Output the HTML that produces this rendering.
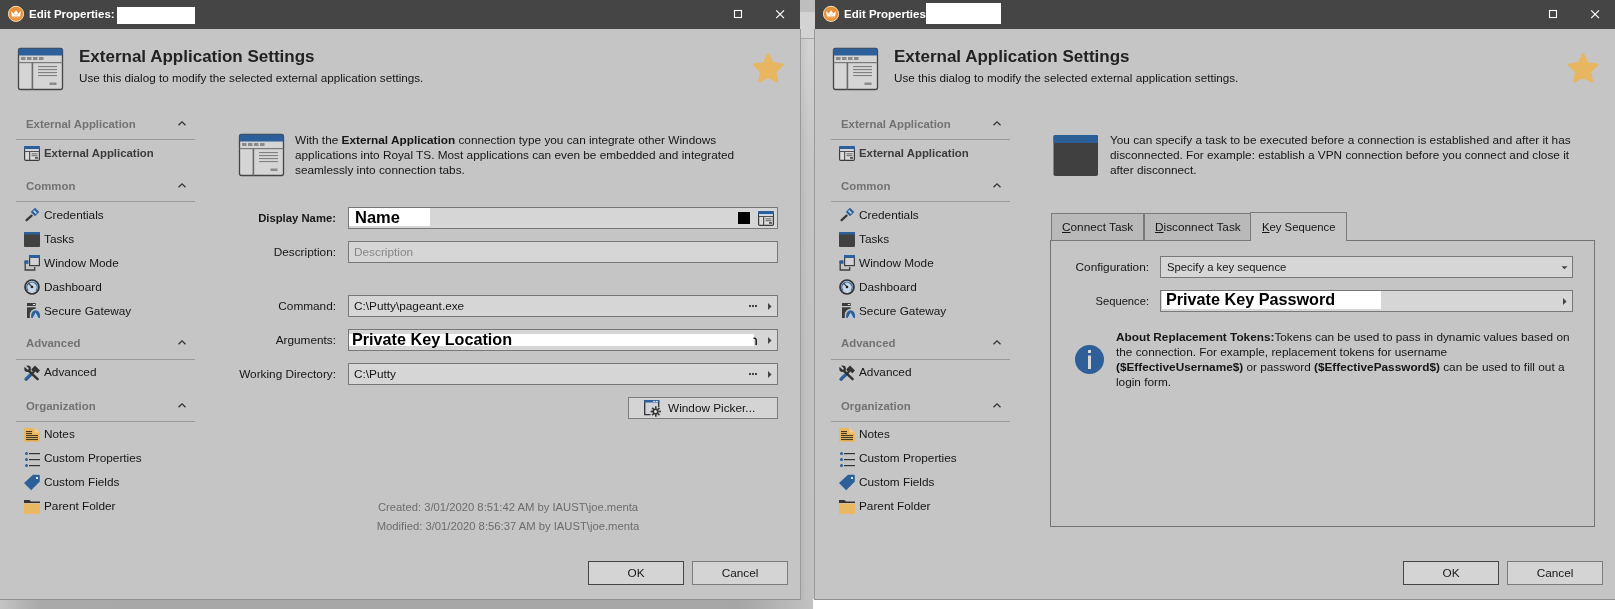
<!DOCTYPE html>
<html><head><meta charset="utf-8">
<style>
*{box-sizing:border-box}
html,body{margin:0;padding:0;width:1615px;height:609px;overflow:hidden;background:#fff;font-family:"Liberation Sans",sans-serif;font-size:11.8px;color:#161616}
.t{position:absolute;white-space:nowrap;line-height:14px;will-change:transform}
svg{position:absolute;overflow:visible}
#strip{position:absolute;left:0;top:599px;width:813px;height:10px;background:linear-gradient(90deg,#c4c4c4 0,#a9a9a9 40px,#a6a6a6 740px,#c2c2c2 813px)}
#gap{position:absolute;left:800px;top:0;width:15px;height:599px;background:#c1c1c1}
#gaptop{position:absolute;left:800px;top:0;width:15px;height:12px;background:#bebebe}
#gapmid{position:absolute;left:800px;top:12px;width:15px;height:17px;background:#d3d3d3}
#gapmid2{position:absolute;left:801px;top:29px;width:13px;height:10px;background:#d3d3d3;border-bottom:1px solid #a8a8a8}
#gapbody{position:absolute;left:801px;top:39px;width:13px;height:560px;background:linear-gradient(90deg,rgba(0,0,0,0.05),rgba(0,0,0,0) 60%),linear-gradient(180deg,#d2d2d2 0,#c6c6c6 120px,#c3c3c3 300px,#c2c2c2 100%)}
.dlg{position:absolute;top:0;height:600px;background:#c5c5c5;overflow:hidden;border-bottom:1px solid #8f8f8f}
.tb{position:absolute;left:0;top:0;width:100%;height:29px;background:#454545}
.ttl{color:#fff;font-weight:bold;font-size:11.5px}
.wb{position:absolute;background:#fff}
.h1{font-size:17px;font-weight:bold;color:#222;line-height:20px}
.nh{font-weight:bold;color:#727272;font-size:11.4px}
.sep{position:absolute;left:16px;width:179px;height:1px;background:#9a9a9a}
.lbl{text-align:right;width:200px}
.box{position:absolute;background:#d6d6d6;border:1px solid #787878}
.btn{position:absolute;background:#d4d4d4;border:1px solid #7c7c7c;height:24px;width:96px}
.btn span{position:absolute;left:0;right:0;top:4px;text-align:center;line-height:14px;will-change:transform}
</style></head><body>
<div id="strip"></div><div id="gap"></div><div id="gapmid2"></div><div id="gapbody"></div>
<div class="dlg" style="left:0;width:801px;border-right:1px solid #9a9a9a"></div>
<div style="position:absolute;left:0px;top:0px;width:800px;height:29px;background:#454545;"></div>
<svg style="left:7px;top:5px" width="18" height="18" viewBox="0 0 18 18">
<circle cx="9" cy="8.85" r="7.6" fill="#e8913a" stroke="#f6dcb6" stroke-width="1"/>
<path d="M4 6.2L6.6 8.6 9 5.3 11.4 8.6 14 6.2 13.1 11.6H4.9z" fill="#fff"/>
<path d="M6.6 8.6L9 10.4 11.4 8.6" fill="none" stroke="#e9b27a" stroke-width="0.7"/>
<rect x="5" y="12.2" width="8" height="1.3" fill="#f0a860"/>
</svg>
<div class="t ttl" style="left:29px;top:7px;">Edit Properties:</div>
<div style="position:absolute;left:117px;top:7px;width:78px;height:17px;background:#fff;"></div>
<svg style="left:733px;top:9px" width="53" height="11" viewBox="0 0 53 11">
<rect x="1.5" y="1.5" width="7" height="7" fill="none" stroke="#fff" stroke-width="1.1"/>
<path d="M43.2 1.3L51 9.1M51 1.3L43.2 9.1" stroke="#fff" stroke-width="1.2"/>
</svg>
<svg style="left:18px;top:48px" width="45" height="42" viewBox="0 0 45 42">
<rect x="0.5" y="0.5" width="44" height="41" rx="2" fill="#d5d5d5" stroke="#454545" stroke-width="1.3"/>
<path d="M2 0.5h41a1.5 1.5 0 0 1 1.5 1.5v5.5h-44v-5.5a1.5 1.5 0 0 1 1.5-1.5z" fill="#2d5f9a"/>
<rect x="3" y="9" width="4.5" height="3" fill="#8a8a8a"/><rect x="9" y="9" width="4.5" height="3" fill="#8a8a8a"/>
<rect x="15" y="9" width="4.5" height="3" fill="#8a8a8a"/><rect x="21" y="9" width="4.5" height="3" fill="#8a8a8a"/>
<rect x="0.5" y="14" width="44" height="1.2" fill="#7a7a7a"/>
<rect x="13.6" y="14.5" width="1.6" height="27" fill="#6a6a6a"/>
<rect x="20" y="18" width="19" height="1.1" fill="#808080"/><rect x="20" y="21" width="19" height="1.1" fill="#808080"/>
<rect x="20" y="24" width="19" height="1.1" fill="#808080"/><rect x="20" y="27" width="19" height="1.1" fill="#808080"/>
<rect x="31.5" y="34.5" width="7" height="2.5" fill="#8a8a8a"/>
</svg>
<div class="t h1" style="left:79px;top:51px;top:47px">External Application Settings</div>
<div class="t " style="left:79px;top:71px;font-size:11.7px">Use this dialog to modify the selected external application settings.</div>
<svg style="left:752px;top:52px" width="33" height="34" viewBox="0 0 33 34">
<polygon points="16.20,2.30 20.55,11.31 30.47,12.66 23.24,19.59 25.02,29.44 16.20,24.70 7.38,29.44 9.16,19.59 1.93,12.66 11.85,11.31" fill="#e8b660" stroke="#e8b660" stroke-width="2.2" stroke-linejoin="round"/>
</svg>
<div class="t nh" style="left:26px;top:117px;">External Application</div>
<svg style="left:178px;top:121px" width="8" height="5" viewBox="0 0 8 5"><path d="M0.5 4.3L4 0.9 7.5 4.3" fill="none" stroke="#333" stroke-width="1.3"/></svg>
<div class="sep" style="left:16px;top:139px"></div>
<svg style="left:24px;top:146px" width="16" height="15" viewBox="0 0 16 15">
<rect x="0.6" y="0.6" width="14.8" height="13.8" rx="1.2" fill="#dcdcdc" stroke="#3a3a3a" stroke-width="1.2"/>
<path d="M1.4 0h13.2a1.4 1.4 0 0 1 1.4 1.4v1.8h-16v-1.8a1.4 1.4 0 0 1 1.4-1.4z" fill="#2d5f9a"/>
<rect x="1.2" y="3.2" width="13.6" height="1.8" fill="#d3dae2"/>
<rect x="0.6" y="5" width="14.8" height="1" fill="#505050"/>
<rect x="5" y="5.5" width="1.2" height="9" fill="#505050"/>
<rect x="7.5" y="7.4" width="6" height="0.9" fill="#555"/><rect x="7.5" y="9.3" width="6" height="0.9" fill="#555"/>
<rect x="11" y="11" width="3" height="1.8" fill="#555"/>
</svg>
<div class="t " style="left:44px;top:146px;font-weight:bold;color:#3c3c3c;font-size:11.4px">External Application</div>
<div class="t nh" style="left:26px;top:179px;">Common</div>
<svg style="left:178px;top:183px" width="8" height="5" viewBox="0 0 8 5"><path d="M0.5 4.3L4 0.9 7.5 4.3" fill="none" stroke="#333" stroke-width="1.3"/></svg>
<div class="sep" style="left:16px;top:201px"></div>
<div class="t " style="left:44px;top:208px;">Credentials</div>
<div class="t " style="left:44px;top:232px;">Tasks</div>
<div class="t " style="left:44px;top:256px;">Window Mode</div>
<div class="t " style="left:44px;top:280px;">Dashboard</div>
<div class="t " style="left:44px;top:304px;">Secure Gateway</div>
<div class="t nh" style="left:26px;top:336px;">Advanced</div>
<svg style="left:178px;top:340px" width="8" height="5" viewBox="0 0 8 5"><path d="M0.5 4.3L4 0.9 7.5 4.3" fill="none" stroke="#333" stroke-width="1.3"/></svg>
<div class="sep" style="left:16px;top:359px"></div>
<div class="t " style="left:44px;top:365px;">Advanced</div>
<div class="t nh" style="left:26px;top:399px;">Organization</div>
<svg style="left:178px;top:403px" width="8" height="5" viewBox="0 0 8 5"><path d="M0.5 4.3L4 0.9 7.5 4.3" fill="none" stroke="#333" stroke-width="1.3"/></svg>
<div class="sep" style="left:16px;top:421px"></div>
<div class="t " style="left:44px;top:427px;">Notes</div>
<div class="t " style="left:44px;top:451px;">Custom Properties</div>
<div class="t " style="left:44px;top:475px;">Custom Fields</div>
<div class="t " style="left:44px;top:499px;">Parent Folder</div>
<svg style="left:24px;top:206px" width="16" height="16" viewBox="0 0 16 16">
<path d="M2.6 14.2L7.6 9.6" stroke="#3a3a3a" stroke-width="2.3" stroke-linecap="round"/>
<rect x="8" y="3" width="6" height="6" transform="rotate(45 11 6)" fill="#2d5f9a"/>
<rect x="10.2" y="4" width="1.6" height="4" transform="rotate(-45 11 6)" fill="#b8d4ee"/>
</svg>
<svg style="left:24px;top:232px" width="16" height="15" viewBox="0 0 16 15">
<rect x="0" y="0" width="16" height="15" rx="1" fill="#414141"/>
<path d="M1 0h14a1 1 0 0 1 1 1v1.6h-16v-1.6a1 1 0 0 1 1-1z" fill="#2d5f9a"/>
</svg>
<svg style="left:24px;top:255px" width="16" height="16" viewBox="0 0 16 16">
<path d="M1.2 6v9h9.5v-3" fill="none" stroke="#3f3f3f" stroke-width="1.3"/>
<rect x="0.5" y="5.3" width="4" height="3.5" fill="#2d5f9a"/>
<rect x="5.6" y="0.6" width="9.8" height="10" fill="#d2d2d2" stroke="#3f3f3f" stroke-width="1.2"/>
<rect x="5" y="0" width="11" height="3" fill="#2d5f9a"/>
</svg>
<svg style="left:24px;top:279px" width="16" height="16" viewBox="0 0 16 16">
<circle cx="8" cy="8" r="7" fill="#c9d6e2" stroke="#333" stroke-width="1.7"/>
<path d="M4 11.6A5.2 5.2 0 1 1 12 11.6" fill="none" stroke="#3a6aa0" stroke-width="1.3"/>
<path d="M5 4.6L8 7.8" stroke="#333" stroke-width="1.1" stroke-linecap="round"/>
<circle cx="8" cy="8" r="1.3" fill="#222"/>
</svg>
<svg style="left:24px;top:302px" width="16" height="16" viewBox="0 0 16 16">
<rect x="3" y="1" width="8.7" height="3" fill="#3a3a3a"/>
<rect x="8.8" y="2" width="2.2" height="1" fill="#e0e0e0"/>
<rect x="3" y="5.3" width="8.7" height="10.7" fill="#3a3a3a"/>
<path d="M5.8 16v-3a5.8 6.2 0 0 1 11.6 0V16z" fill="#c5c5c5"/>
<path d="M7.2 16v-2.6a4.4 5.2 0 0 1 8.8 0V16z" fill="#2d5f9a"/>
<path d="M8.6 16l3-5.6 3 5.6z" fill="#b8cce0"/>
</svg>
<svg style="left:24px;top:365px" width="16" height="16" viewBox="0 0 16 16">
<path d="M10 6.8L6 10.4" stroke="#333" stroke-width="2.2"/><path d="M6.6 9.8L2 14.2" stroke="#2d5f9a" stroke-width="3.3" stroke-linecap="round"/>
<polygon points="7.2,4.6 11,0.6 16,5.4 13.4,8.2 11.2,6.6 9.4,7.6" fill="#333"/>
<path d="M4.6 5.6L13.6 14.2" stroke="#333" stroke-width="2.5" stroke-linecap="round"/>
<circle cx="3.6" cy="3.8" r="3.3" fill="#333"/>
<path d="M0.6 0.4L3.8 3.6" stroke="#c5c5c5" stroke-width="2" stroke-linecap="round"/>
</svg>
<svg style="left:24px;top:428px" width="16" height="14" viewBox="0 0 16 14">
<path d="M0 0h10.5l5.5 4.5V14H0z" fill="#e8b865"/>
<path d="M10.5 0l5.5 4.5H10.5z" fill="#efcf90"/>
<rect x="2" y="3" width="6" height="1.1" fill="#4a3a20"/><rect x="2" y="5" width="6" height="1.1" fill="#4a3a20"/>
<rect x="2" y="7" width="12" height="1.1" fill="#4a3a20"/><rect x="2" y="9" width="12" height="1.1" fill="#4a3a20"/>
<rect x="2" y="11" width="12" height="1.1" fill="#4a3a20"/>
</svg>
<svg style="left:24px;top:451px" width="16" height="16" viewBox="0 0 16 16">
<circle cx="2.5" cy="2.5" r="1.5" fill="#2d5f9a"/><circle cx="2.5" cy="8.5" r="1.5" fill="#2d5f9a"/><circle cx="2.5" cy="14.5" r="1.5" fill="#2d5f9a"/>
<rect x="5" y="2" width="11" height="1.2" fill="#333"/><rect x="5" y="8" width="11" height="1.2" fill="#333"/><rect x="5" y="14" width="11" height="1.2" fill="#333"/>
</svg>
<svg style="left:24px;top:474px" width="16" height="17" viewBox="0 0 16 17">
<path d="M9 0.8h5.8a1 1 0 0 1 1 1V7.6L7.2 16.2 0 9z" fill="#2d5f9a"/>
<rect x="12" y="3" width="2" height="2" fill="#d8e4f0"/>
</svg>
<svg style="left:24px;top:499px" width="16" height="15" viewBox="0 0 16 15">
<path d="M0 1h5.5l1.5 1.5h9v1.4h-16z" fill="#333"/>
<rect x="0" y="4.6" width="16" height="10.4" fill="#e8b865"/>
</svg>
<svg style="left:239px;top:134px" width="45" height="42" viewBox="0 0 45 42">
<rect x="0.5" y="0.5" width="44" height="41" rx="2" fill="#d5d5d5" stroke="#454545" stroke-width="1.3"/>
<path d="M2 0.5h41a1.5 1.5 0 0 1 1.5 1.5v5.5h-44v-5.5a1.5 1.5 0 0 1 1.5-1.5z" fill="#2d5f9a"/>
<rect x="3" y="9" width="4.5" height="3" fill="#8a8a8a"/><rect x="9" y="9" width="4.5" height="3" fill="#8a8a8a"/>
<rect x="15" y="9" width="4.5" height="3" fill="#8a8a8a"/><rect x="21" y="9" width="4.5" height="3" fill="#8a8a8a"/>
<rect x="0.5" y="14" width="44" height="1.2" fill="#7a7a7a"/>
<rect x="13.6" y="14.5" width="1.6" height="27" fill="#6a6a6a"/>
<rect x="20" y="18" width="19" height="1.1" fill="#808080"/><rect x="20" y="21" width="19" height="1.1" fill="#808080"/>
<rect x="20" y="24" width="19" height="1.1" fill="#808080"/><rect x="20" y="27" width="19" height="1.1" fill="#808080"/>
<rect x="31.5" y="34.5" width="7" height="2.5" fill="#8a8a8a"/>
</svg>
<div class="t " style="left:295px;top:133px;">With the <b>External Application</b> connection type you can integrate other Windows</div>
<div class="t " style="left:295px;top:148px;">applications into Royal TS. Most applications can even be embedded and integrated</div>
<div class="t " style="left:295px;top:163px;">seamlessly into connection tabs.</div>
<div class="t lbl " style="left:136px;top:211px;font-weight:bold;font-size:11.3px">Display Name:</div>
<div class="box" style="left:348px;top:207px;width:430px;height:22px"></div>
<div style="position:absolute;left:349px;top:208px;width:81px;height:18px;background:#fff;"></div>
<div class="t " style="left:355px;top:212px;font-weight:bold;font-size:16.5px;color:#000;line-height:18px;top:208px">Name</div>
<div style="position:absolute;left:738px;top:212px;width:12px;height:12px;background:#000;"></div>
<svg style="left:758px;top:211px" width="16" height="15" viewBox="0 0 16 15">
<rect x="0.6" y="0.6" width="14.8" height="13.8" rx="1.2" fill="#dcdcdc" stroke="#3a3a3a" stroke-width="1.2"/>
<path d="M1.4 0h13.2a1.4 1.4 0 0 1 1.4 1.4v1.8h-16v-1.8a1.4 1.4 0 0 1 1.4-1.4z" fill="#2d5f9a"/>
<rect x="1.2" y="3.2" width="13.6" height="1.8" fill="#d3dae2"/>
<rect x="0.6" y="5" width="14.8" height="1" fill="#505050"/>
<rect x="5" y="5.5" width="1.2" height="9" fill="#505050"/>
<rect x="7.5" y="7.4" width="6" height="0.9" fill="#555"/><rect x="7.5" y="9.3" width="6" height="0.9" fill="#555"/>
<rect x="11" y="11" width="3" height="1.8" fill="#555"/>
</svg>
<div class="t lbl " style="left:136px;top:245px;">Description:</div>
<div class="box" style="left:348px;top:241px;width:430px;height:22px"></div>
<div class="t " style="left:354px;top:245px;color:#858585">Description</div>
<div class="t lbl " style="left:136px;top:299px;">Command:</div>
<div class="box" style="left:348px;top:295px;width:430px;height:22px"></div>
<div class="t " style="left:354px;top:299px;">C:\Putty\pageant.exe</div>
<svg style="left:749px;top:305px" width="9" height="2" viewBox="0 0 9 2"><rect x="0" y="0" width="2" height="2" fill="#444"/><rect x="3" y="0" width="2" height="2" fill="#444"/><rect x="6" y="0" width="2" height="2" fill="#444"/></svg>
<svg style="left:768px;top:303px" width="4" height="7" viewBox="0 0 4 7"><path d="M0 0L3.6 3.5 0 7z" fill="#444"/></svg>
<div class="t lbl " style="left:136px;top:333px;">Arguments:</div>
<div class="box" style="left:348px;top:329px;width:430px;height:22px"></div>
<div style="position:absolute;left:349px;top:334px;width:405px;height:12px;background:#fff;"></div>
<svg style="left:753px;top:337px" width="5" height="9" viewBox="0 0 5 9"><path d="M0.5 1.2Q3.2 0.6 3.2 3.4V8" fill="none" stroke="#111" stroke-width="1.4"/></svg>
<div class="t " style="left:352px;top:334px;font-weight:bold;font-size:16.2px;color:#000;line-height:18px;top:330px">Private Key Location</div>
<svg style="left:768px;top:337px" width="4" height="7" viewBox="0 0 4 7"><path d="M0 0L3.6 3.5 0 7z" fill="#444"/></svg>
<div class="t lbl " style="left:136px;top:367px;">Working Directory:</div>
<div class="box" style="left:348px;top:363px;width:430px;height:22px"></div>
<div class="t " style="left:354px;top:367px;">C:\Putty</div>
<svg style="left:749px;top:373px" width="9" height="2" viewBox="0 0 9 2"><rect x="0" y="0" width="2" height="2" fill="#444"/><rect x="3" y="0" width="2" height="2" fill="#444"/><rect x="6" y="0" width="2" height="2" fill="#444"/></svg>
<svg style="left:768px;top:371px" width="4" height="7" viewBox="0 0 4 7"><path d="M0 0L3.6 3.5 0 7z" fill="#444"/></svg>
<div class="btn" style="left:628px;top:397px;width:150px;height:22px"></div>
<svg style="left:644px;top:400px" width="18" height="17" viewBox="0 0 18 17">
<path d="M6.5 14.6H0.7V0.7h14V7.2" fill="#d0d4d8" stroke="#333" stroke-width="1.3"/>
<path d="M1 0h13.4a1 1 0 0 1 1 1v1.6h-15.4v-1.6a1 1 0 0 1 1-1z" fill="#2d5f9a"/>
<rect x="9" y="0.9" width="2.2" height="1" fill="#d8e6f4"/><rect x="11.8" y="0.9" width="2.2" height="1" fill="#d8e6f4"/>
<circle cx="11.5" cy="11.5" r="5.4" fill="#d4d4d4"/>
<rect x="11" y="6.3" width="1.6" height="2.4" fill="#333" transform="rotate(0 11.8 11.5)"/><rect x="11" y="6.3" width="1.6" height="2.4" fill="#333" transform="rotate(45 11.8 11.5)"/><rect x="11" y="6.3" width="1.6" height="2.4" fill="#333" transform="rotate(90 11.8 11.5)"/><rect x="11" y="6.3" width="1.6" height="2.4" fill="#333" transform="rotate(135 11.8 11.5)"/><rect x="11" y="6.3" width="1.6" height="2.4" fill="#333" transform="rotate(180 11.8 11.5)"/><rect x="11" y="6.3" width="1.6" height="2.4" fill="#333" transform="rotate(225 11.8 11.5)"/><rect x="11" y="6.3" width="1.6" height="2.4" fill="#333" transform="rotate(270 11.8 11.5)"/><rect x="11" y="6.3" width="1.6" height="2.4" fill="#333" transform="rotate(315 11.8 11.5)"/>
<circle cx="11.5" cy="11.5" r="3.1" fill="#333"/>
<circle cx="11.5" cy="11.5" r="1.5" fill="#e8e8e8"/>
</svg>
<div class="t " style="left:668px;top:401px;">Window Picker...</div>
<div class="t" style="left:308px;width:400px;text-align:center;top:500px;color:#6c6c6c;font-size:11.25px">Created: 3/01/2020 8:51:42 AM by IAUST\joe.menta</div>
<div class="t" style="left:308px;width:400px;text-align:center;top:519px;color:#6c6c6c;font-size:11.25px">Modified: 3/01/2020 8:56:37 AM by IAUST\joe.menta</div>
<div class="btn" style="left:588px;top:561px;width:96px;border-color:#454545"><span>OK</span></div>
<div class="btn" style="left:692px;top:561px;width:96px;border-color:#7c7c7c"><span>Cancel</span></div>
<div class="dlg" style="left:814px;width:801px;border-left:1px solid #9a9a9a"></div>
<div style="position:absolute;left:815px;top:0px;width:800px;height:29px;background:#454545;"></div>
<svg style="left:822px;top:5px" width="18" height="18" viewBox="0 0 18 18">
<circle cx="9" cy="8.85" r="7.6" fill="#e8913a" stroke="#f6dcb6" stroke-width="1"/>
<path d="M4 6.2L6.6 8.6 9 5.3 11.4 8.6 14 6.2 13.1 11.6H4.9z" fill="#fff"/>
<path d="M6.6 8.6L9 10.4 11.4 8.6" fill="none" stroke="#e9b27a" stroke-width="0.7"/>
<rect x="5" y="12.2" width="8" height="1.3" fill="#f0a860"/>
</svg>
<div class="t ttl" style="left:844px;top:7px;">Edit Properties</div>
<div style="position:absolute;left:926px;top:3px;width:75px;height:21px;background:#fff;"></div>
<svg style="left:1548px;top:9px" width="53" height="11" viewBox="0 0 53 11">
<rect x="1.5" y="1.5" width="7" height="7" fill="none" stroke="#fff" stroke-width="1.1"/>
<path d="M43.2 1.3L51 9.1M51 1.3L43.2 9.1" stroke="#fff" stroke-width="1.2"/>
</svg>
<svg style="left:833px;top:48px" width="45" height="42" viewBox="0 0 45 42">
<rect x="0.5" y="0.5" width="44" height="41" rx="2" fill="#d5d5d5" stroke="#454545" stroke-width="1.3"/>
<path d="M2 0.5h41a1.5 1.5 0 0 1 1.5 1.5v5.5h-44v-5.5a1.5 1.5 0 0 1 1.5-1.5z" fill="#2d5f9a"/>
<rect x="3" y="9" width="4.5" height="3" fill="#8a8a8a"/><rect x="9" y="9" width="4.5" height="3" fill="#8a8a8a"/>
<rect x="15" y="9" width="4.5" height="3" fill="#8a8a8a"/><rect x="21" y="9" width="4.5" height="3" fill="#8a8a8a"/>
<rect x="0.5" y="14" width="44" height="1.2" fill="#7a7a7a"/>
<rect x="13.6" y="14.5" width="1.6" height="27" fill="#6a6a6a"/>
<rect x="20" y="18" width="19" height="1.1" fill="#808080"/><rect x="20" y="21" width="19" height="1.1" fill="#808080"/>
<rect x="20" y="24" width="19" height="1.1" fill="#808080"/><rect x="20" y="27" width="19" height="1.1" fill="#808080"/>
<rect x="31.5" y="34.5" width="7" height="2.5" fill="#8a8a8a"/>
</svg>
<div class="t h1" style="left:894px;top:51px;top:47px">External Application Settings</div>
<div class="t " style="left:894px;top:71px;font-size:11.7px">Use this dialog to modify the selected external application settings.</div>
<svg style="left:1567px;top:52px" width="33" height="34" viewBox="0 0 33 34">
<polygon points="16.20,2.30 20.55,11.31 30.47,12.66 23.24,19.59 25.02,29.44 16.20,24.70 7.38,29.44 9.16,19.59 1.93,12.66 11.85,11.31" fill="#e8b660" stroke="#e8b660" stroke-width="2.2" stroke-linejoin="round"/>
</svg>
<div class="t nh" style="left:841px;top:117px;">External Application</div>
<svg style="left:993px;top:121px" width="8" height="5" viewBox="0 0 8 5"><path d="M0.5 4.3L4 0.9 7.5 4.3" fill="none" stroke="#333" stroke-width="1.3"/></svg>
<div class="sep" style="left:831px;top:139px"></div>
<svg style="left:839px;top:146px" width="16" height="15" viewBox="0 0 16 15">
<rect x="0.6" y="0.6" width="14.8" height="13.8" rx="1.2" fill="#dcdcdc" stroke="#3a3a3a" stroke-width="1.2"/>
<path d="M1.4 0h13.2a1.4 1.4 0 0 1 1.4 1.4v1.8h-16v-1.8a1.4 1.4 0 0 1 1.4-1.4z" fill="#2d5f9a"/>
<rect x="1.2" y="3.2" width="13.6" height="1.8" fill="#d3dae2"/>
<rect x="0.6" y="5" width="14.8" height="1" fill="#505050"/>
<rect x="5" y="5.5" width="1.2" height="9" fill="#505050"/>
<rect x="7.5" y="7.4" width="6" height="0.9" fill="#555"/><rect x="7.5" y="9.3" width="6" height="0.9" fill="#555"/>
<rect x="11" y="11" width="3" height="1.8" fill="#555"/>
</svg>
<div class="t " style="left:859px;top:146px;font-weight:bold;color:#3c3c3c;font-size:11.4px">External Application</div>
<div class="t nh" style="left:841px;top:179px;">Common</div>
<svg style="left:993px;top:183px" width="8" height="5" viewBox="0 0 8 5"><path d="M0.5 4.3L4 0.9 7.5 4.3" fill="none" stroke="#333" stroke-width="1.3"/></svg>
<div class="sep" style="left:831px;top:201px"></div>
<div class="t " style="left:859px;top:208px;">Credentials</div>
<div class="t " style="left:859px;top:232px;">Tasks</div>
<div class="t " style="left:859px;top:256px;">Window Mode</div>
<div class="t " style="left:859px;top:280px;">Dashboard</div>
<div class="t " style="left:859px;top:304px;">Secure Gateway</div>
<div class="t nh" style="left:841px;top:336px;">Advanced</div>
<svg style="left:993px;top:340px" width="8" height="5" viewBox="0 0 8 5"><path d="M0.5 4.3L4 0.9 7.5 4.3" fill="none" stroke="#333" stroke-width="1.3"/></svg>
<div class="sep" style="left:831px;top:359px"></div>
<div class="t " style="left:859px;top:365px;">Advanced</div>
<div class="t nh" style="left:841px;top:399px;">Organization</div>
<svg style="left:993px;top:403px" width="8" height="5" viewBox="0 0 8 5"><path d="M0.5 4.3L4 0.9 7.5 4.3" fill="none" stroke="#333" stroke-width="1.3"/></svg>
<div class="sep" style="left:831px;top:421px"></div>
<div class="t " style="left:859px;top:427px;">Notes</div>
<div class="t " style="left:859px;top:451px;">Custom Properties</div>
<div class="t " style="left:859px;top:475px;">Custom Fields</div>
<div class="t " style="left:859px;top:499px;">Parent Folder</div>
<svg style="left:839px;top:206px" width="16" height="16" viewBox="0 0 16 16">
<path d="M2.6 14.2L7.6 9.6" stroke="#3a3a3a" stroke-width="2.3" stroke-linecap="round"/>
<rect x="8" y="3" width="6" height="6" transform="rotate(45 11 6)" fill="#2d5f9a"/>
<rect x="10.2" y="4" width="1.6" height="4" transform="rotate(-45 11 6)" fill="#b8d4ee"/>
</svg>
<svg style="left:839px;top:232px" width="16" height="15" viewBox="0 0 16 15">
<rect x="0" y="0" width="16" height="15" rx="1" fill="#414141"/>
<path d="M1 0h14a1 1 0 0 1 1 1v1.6h-16v-1.6a1 1 0 0 1 1-1z" fill="#2d5f9a"/>
</svg>
<svg style="left:839px;top:255px" width="16" height="16" viewBox="0 0 16 16">
<path d="M1.2 6v9h9.5v-3" fill="none" stroke="#3f3f3f" stroke-width="1.3"/>
<rect x="0.5" y="5.3" width="4" height="3.5" fill="#2d5f9a"/>
<rect x="5.6" y="0.6" width="9.8" height="10" fill="#d2d2d2" stroke="#3f3f3f" stroke-width="1.2"/>
<rect x="5" y="0" width="11" height="3" fill="#2d5f9a"/>
</svg>
<svg style="left:839px;top:279px" width="16" height="16" viewBox="0 0 16 16">
<circle cx="8" cy="8" r="7" fill="#c9d6e2" stroke="#333" stroke-width="1.7"/>
<path d="M4 11.6A5.2 5.2 0 1 1 12 11.6" fill="none" stroke="#3a6aa0" stroke-width="1.3"/>
<path d="M5 4.6L8 7.8" stroke="#333" stroke-width="1.1" stroke-linecap="round"/>
<circle cx="8" cy="8" r="1.3" fill="#222"/>
</svg>
<svg style="left:839px;top:302px" width="16" height="16" viewBox="0 0 16 16">
<rect x="3" y="1" width="8.7" height="3" fill="#3a3a3a"/>
<rect x="8.8" y="2" width="2.2" height="1" fill="#e0e0e0"/>
<rect x="3" y="5.3" width="8.7" height="10.7" fill="#3a3a3a"/>
<path d="M5.8 16v-3a5.8 6.2 0 0 1 11.6 0V16z" fill="#c5c5c5"/>
<path d="M7.2 16v-2.6a4.4 5.2 0 0 1 8.8 0V16z" fill="#2d5f9a"/>
<path d="M8.6 16l3-5.6 3 5.6z" fill="#b8cce0"/>
</svg>
<svg style="left:839px;top:365px" width="16" height="16" viewBox="0 0 16 16">
<path d="M10 6.8L6 10.4" stroke="#333" stroke-width="2.2"/><path d="M6.6 9.8L2 14.2" stroke="#2d5f9a" stroke-width="3.3" stroke-linecap="round"/>
<polygon points="7.2,4.6 11,0.6 16,5.4 13.4,8.2 11.2,6.6 9.4,7.6" fill="#333"/>
<path d="M4.6 5.6L13.6 14.2" stroke="#333" stroke-width="2.5" stroke-linecap="round"/>
<circle cx="3.6" cy="3.8" r="3.3" fill="#333"/>
<path d="M0.6 0.4L3.8 3.6" stroke="#c5c5c5" stroke-width="2" stroke-linecap="round"/>
</svg>
<svg style="left:839px;top:428px" width="16" height="14" viewBox="0 0 16 14">
<path d="M0 0h10.5l5.5 4.5V14H0z" fill="#e8b865"/>
<path d="M10.5 0l5.5 4.5H10.5z" fill="#efcf90"/>
<rect x="2" y="3" width="6" height="1.1" fill="#4a3a20"/><rect x="2" y="5" width="6" height="1.1" fill="#4a3a20"/>
<rect x="2" y="7" width="12" height="1.1" fill="#4a3a20"/><rect x="2" y="9" width="12" height="1.1" fill="#4a3a20"/>
<rect x="2" y="11" width="12" height="1.1" fill="#4a3a20"/>
</svg>
<svg style="left:839px;top:451px" width="16" height="16" viewBox="0 0 16 16">
<circle cx="2.5" cy="2.5" r="1.5" fill="#2d5f9a"/><circle cx="2.5" cy="8.5" r="1.5" fill="#2d5f9a"/><circle cx="2.5" cy="14.5" r="1.5" fill="#2d5f9a"/>
<rect x="5" y="2" width="11" height="1.2" fill="#333"/><rect x="5" y="8" width="11" height="1.2" fill="#333"/><rect x="5" y="14" width="11" height="1.2" fill="#333"/>
</svg>
<svg style="left:839px;top:474px" width="16" height="17" viewBox="0 0 16 17">
<path d="M9 0.8h5.8a1 1 0 0 1 1 1V7.6L7.2 16.2 0 9z" fill="#2d5f9a"/>
<rect x="12" y="3" width="2" height="2" fill="#d8e4f0"/>
</svg>
<svg style="left:839px;top:499px" width="16" height="15" viewBox="0 0 16 15">
<path d="M0 1h5.5l1.5 1.5h9v1.4h-16z" fill="#333"/>
<rect x="0" y="4.6" width="16" height="10.4" fill="#e8b865"/>
</svg>
<svg style="left:1053px;top:135px" width="45" height="41" viewBox="0 0 45 41">
<rect x="0.5" y="0" width="44.5" height="41" rx="1.8" fill="#404040"/>
<path d="M2.3 0h40.9a1.8 1.8 0 0 1 1.8 1.8v6.2h-44.5v-6.2a1.8 1.8 0 0 1 1.8-1.8z" fill="#2b5d96"/>
</svg>
<div class="t " style="left:1110px;top:133px;">You can specify a task to be executed before a connection is established and after it has</div>
<div class="t " style="left:1110px;top:148px;">disconnected. For example: establish a VPN connection before you connect and close it</div>
<div class="t " style="left:1110px;top:163px;">after disconnect.</div>
<div style="position:absolute;left:1050px;top:240px;width:545px;height:287px;border:1px solid #737373;background:#c5c5c5"></div>
<div style="position:absolute;left:1051px;top:213px;width:93px;height:28px;border:1px solid #7a7a7a;background:#b9b9b9"></div>
<div style="position:absolute;left:1144px;top:213px;width:107px;height:28px;border:1px solid #7a7a7a;background:#b9b9b9"></div>
<div style="position:absolute;left:1250px;top:212px;width:97px;height:29px;border:1px solid #7a7a7a;border-bottom:none;background:#c5c5c5"></div>
<div class="t " style="left:1062px;top:220px;"><u>C</u>onnect Task</div>
<div class="t " style="left:1155px;top:220px;"><u>D</u>isconnect Task</div>
<div class="t " style="left:1262px;top:220px;font-size:11.3px"><u>K</u>ey Sequence</div>
<div class="t lbl " style="left:949px;top:260px;">Configuration:</div>
<div class="box" style="left:1160px;top:256px;width:413px;height:22px"></div>
<div class="t " style="left:1167px;top:260px;font-size:11.3px">Specify a key sequence</div>
<svg style="left:1561px;top:266px" width="7" height="4" viewBox="0 0 7 4"><path d="M0.5 0.2h6L3.5 3.2z" fill="#444"/></svg>
<div class="t lbl " style="left:949px;top:294px;font-size:11.2px">Sequence:</div>
<div class="box" style="left:1160px;top:290px;width:413px;height:22px"></div>
<div style="position:absolute;left:1162px;top:291px;width:219px;height:18px;background:#fff;"></div>
<div class="t " style="left:1166px;top:294px;font-weight:bold;font-size:16.2px;color:#000;line-height:18px;top:290px">Private Key Password</div>
<svg style="left:1563px;top:298px" width="4" height="7" viewBox="0 0 4 7"><path d="M0 0L3.6 3.5 0 7z" fill="#444"/></svg>
<svg style="left:1075px;top:345px" width="29" height="29" viewBox="0 0 29 29">
<circle cx="14.5" cy="14.5" r="14.5" fill="#2e5f98"/>
<rect x="13" y="5" width="3" height="3" fill="#d8d8d8"/><rect x="13" y="10.5" width="3" height="13.5" fill="#d8d8d8"/>
</svg>
<div class="t " style="left:1116px;top:330px;"><b>About Replacement Tokens:</b>Tokens can be used to pass in dynamic values based on</div>
<div class="t " style="left:1116px;top:345px;">the connection. For example, replacement tokens for username</div>
<div class="t " style="left:1116px;top:360px;"><b>($EffectiveUsername$)</b> or password <b>($EffectivePassword$)</b> can be used to fill out a</div>
<div class="t " style="left:1116px;top:375px;">login form.</div>
<div class="btn" style="left:1403px;top:561px;width:96px;border-color:#454545"><span>OK</span></div>
<div class="btn" style="left:1507px;top:561px;width:96px;border-color:#7c7c7c"><span>Cancel</span></div>
<div id="gaptop"></div><div id="gapmid"></div>
</body></html>
